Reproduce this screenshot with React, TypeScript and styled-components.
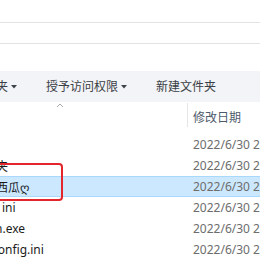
import styled, { createGlobalStyle } from 'styled-components';

const GlobalStyle = createGlobalStyle`
  html, body {
    margin: 0;
    padding: 0;
    background: #ffffff;
    overflow: hidden;
  }
  body {
    font-family: "Noto Sans", "Noto Sans CJK SC", sans-serif;
    font-size: 12px;
  }
`;

interface FileRow {
  name: string;
  shift: number;
  date: string;
  selected?: boolean;
}

const rows: FileRow[] = [
  { name: '', shift: 0, date: '2022/6/30 20:15' },
  { name: '夹', shift: -4, date: '2022/6/30 20:15' },
  { name: '西瓜ღ', shift: -4, date: '2022/6/30 20:16', selected: true },
  { name: 'ini', shift: 2, date: '2022/6/30 20:15' },
  { name: 'n.exe', shift: -5, date: '2022/6/30 20:15' },
  { name: 'config.ini', shift: -8, date: '2022/6/30 20:15' },
];

const Caret = () => (
  <svg width="6" height="4" viewBox="0 0 6 4">
    <polygon points="0,0 6,0 3,3.5" fill="#3f444b" />
  </svg>
);

const SortChevron = () => (
  <svg width="8" height="5" viewBox="0 0 8 5">
    <polyline points="1,4 4,1 7,4" fill="none" stroke="#a9a9a9" strokeWidth="1" />
  </svg>
);

export default function App() {
  return (
    <Window>
      <GlobalStyle />
      <Strip $height={22} />
      <Rule />
      <Strip $height={20} />
      <Rule />
      <Strip $height={27} />
      <Toolbar>
        <ToolButton>
          <ToolLabel>夹</ToolLabel>
          <Caret />
        </ToolButton>
        <ToolButton>
          <ToolLabel>授予访问权限</ToolLabel>
          <Caret />
        </ToolButton>
        <ToolButton>
          <ToolLabel>新建文件夹</ToolLabel>
        </ToolButton>
      </Toolbar>
      <Header>
        <NameHeader>
          <SortChevron />
        </NameHeader>
        <ColumnDivider />
        <DateHeader>修改日期</DateHeader>
      </Header>
      <List>
        {rows.map((row, i) => (
          <Row key={i} $selected={row.selected}>
            <NameCell>
              <NameText $shift={row.shift}>{row.name}</NameText>
            </NameCell>
            <DateCell>{row.date}</DateCell>
          </Row>
        ))}
      </List>
      <Highlight />
    </Window>
  );
}

const Window = styled.div`
  position: relative;
  width: 260px;
  height: 260px;
  overflow: hidden;
  background: #ffffff;
`;

const Strip = styled.div<{ $height: number }>`
  height: ${({ $height }) => $height}px;
  background: #ffffff;
`;

const Rule = styled.div`
  height: 1px;
  background: #e3e3e3;
`;

const Toolbar = styled.div`
  display: flex;
  align-items: center;
  gap: 29px;
  height: 31px;
  margin-left: -4px;
  background: #f3f4f7;
  color: #3a3e45;
`;

const ToolButton = styled.div`
  display: flex;
  align-items: center;
  gap: 3px;
  white-space: nowrap;
`;

const ToolLabel = styled.span`
  font-size: 12px;
  line-height: 16px;
`;

const Header = styled.div`
  display: flex;
  height: 32px;
`;

const NameHeader = styled.div`
  width: 187px;
  flex: none;
  display: flex;
  align-items: flex-start;
  padding-left: 56px;
  padding-top: 1px;
  box-sizing: border-box;
`;

const ColumnDivider = styled.div`
  width: 1px;
  height: 24px;
  margin-top: 1px;
  background: #e5e5e5;
`;

const DateHeader = styled.div`
  display: flex;
  align-items: center;
  padding-left: 5px;
  padding-bottom: 2px;
  color: #4f5b6b;
  white-space: nowrap;
`;

const List = styled.div`
  display: flex;
  flex-direction: column;
`;

const Row = styled.div<{ $selected?: boolean }>`
  display: flex;
  align-items: center;
  height: 21px;
  box-sizing: border-box;
  background: ${({ $selected }) => ($selected ? '#cce8ff' : 'transparent')};
  border-top: 1px solid ${({ $selected }) => ($selected ? '#a9d8fd' : 'transparent')};
  border-bottom: 1px solid ${({ $selected }) => ($selected ? '#a9d8fd' : 'transparent')};
`;

const NameCell = styled.div`
  width: 188px;
  flex: none;
  overflow: hidden;
  white-space: nowrap;
  color: #1b1b1b;
`;

const NameText = styled.span<{ $shift: number }>`
  display: inline-block;
  margin-left: ${({ $shift }) => $shift}px;
`;

const DateCell = styled.div`
  padding-left: 5px;
  white-space: nowrap;
  color: #6d6d6d;
`;

const Highlight = styled.div`
  position: absolute;
  left: -20px;
  top: 163px;
  width: 83px;
  height: 38px;
  box-sizing: border-box;
  border: 2px solid #e3262b;
  border-radius: 4px;
  pointer-events: none;
`;
